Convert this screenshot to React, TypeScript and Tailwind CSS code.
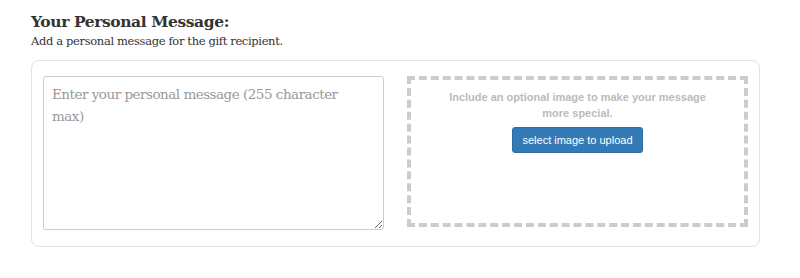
export default function App() {
  return (
    <div className="w-[800px] h-[278px] bg-white pt-[12px] pl-[31px]">
      <h2 className="font-['DejaVu_Serif',serif] font-bold text-[15.5px] leading-[20px] text-[#333] tracking-[-0.4px]">
        Your Personal Message:
      </h2>
      <p className="font-['DejaVu_Serif',serif] text-[11.5px] leading-[18px] text-[#333] tracking-[-0.35px]">
        Add a personal message for the gift recipient.
      </p>

      <div className="mt-[10px] w-[729px] h-[187px] border border-[#e3e3e3] rounded-[8px] flex pl-[11px] pt-[15px] gap-[23px]">
        <textarea
          className="w-[341px] h-[154px] border border-[#ccc] rounded-[3px] pl-[8px] pr-[30px] py-[6px] font-['DejaVu_Serif',serif] text-[13.5px] leading-[22px] tracking-[-0.5px] text-[#555] placeholder:text-[#999] resize-y outline-none"
          placeholder="Enter your personal message (255 character max)"
        />
        <div className="w-[341px] h-[151px] border-4 border-dashed border-[#ccc] flex flex-col items-center pt-[9px]">
          <p className="w-[270px] text-center font-['Liberation_Sans',sans-serif] font-bold text-[11px] leading-[16px] text-[#bbb]">
            Include an optional image to make your message more special.
          </p>
          <button className="mt-[6px] h-[26px] px-[9px] bg-[#337ab7] border border-[#2e6da4] rounded-[3px] font-['Liberation_Sans',sans-serif] text-[11px] text-white">
            select image to upload
          </button>
        </div>
      </div>
    </div>
  )
}
